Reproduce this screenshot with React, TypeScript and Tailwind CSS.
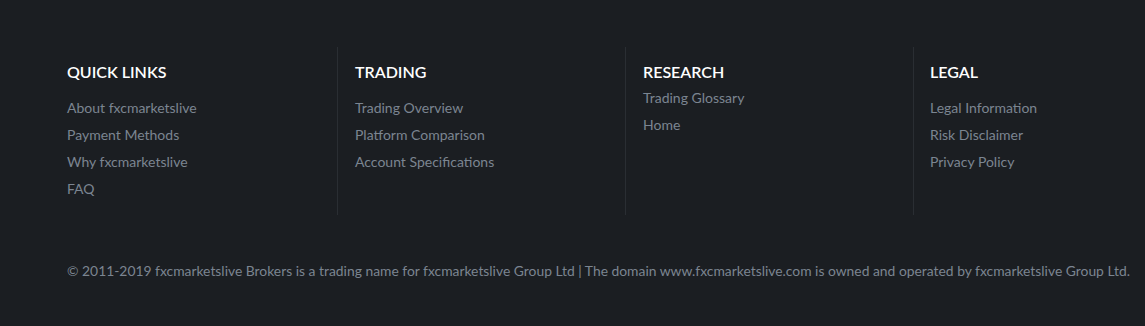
const columns = [
  {
    title: "QUICK LINKS",
    tight: false,
    links: ["About fxcmarketslive", "Payment Methods", "Why fxcmarketslive", "FAQ"],
  },
  {
    title: "TRADING",
    tight: false,
    links: ["Trading Overview", "Platform Comparison", "Account Specifications"],
  },
  {
    title: "RESEARCH",
    tight: true,
    links: ["Trading Glossary", "Home"],
  },
  {
    title: "LEGAL",
    tight: false,
    links: ["Legal Information", "Risk Disclaimer", "Privacy Policy"],
  },
];

export default function App() {
  return (
    <footer
      className="w-[1145px] h-[326px] overflow-hidden bg-[#1b1e22] pt-[47px] pl-[49px]"
      style={{ fontFamily: "Lato, 'Noto Sans', sans-serif" }}
    >
      <div className="flex">
        {columns.map((col, i) => (
          <div
            key={col.title}
            className={`w-[288px] shrink-0 h-[168px] pt-[15px] border-l ${
              i > 0 ? "border-[#2a2e33]" : "border-transparent"
            } ${i === 3 ? "pl-[16px]" : "pl-[17px]"}`}
          >
            <h3 className="text-[16px] leading-[20px] font-semibold text-white">{col.title}</h3>
            <ul className={col.tight ? "mt-[2px]" : "mt-[12px]"}>
              {col.links.map((l) => (
                <li key={l} className="text-[14px] leading-[27px] text-[#7b8591]">
                  {l}
                </li>
              ))}
            </ul>
          </div>
        ))}
      </div>
      <p className="mt-[46px] pl-[18px] text-[13.87px] leading-[20px] text-[#7b8591] whitespace-nowrap">
        © 2011-2019 fxcmarketslive Brokers is a trading name for fxcmarketslive Group Ltd | The domain
        www.fxcmarketslive.com is owned and operated by fxcmarketslive Group Ltd.
      </p>
    </footer>
  );
}
